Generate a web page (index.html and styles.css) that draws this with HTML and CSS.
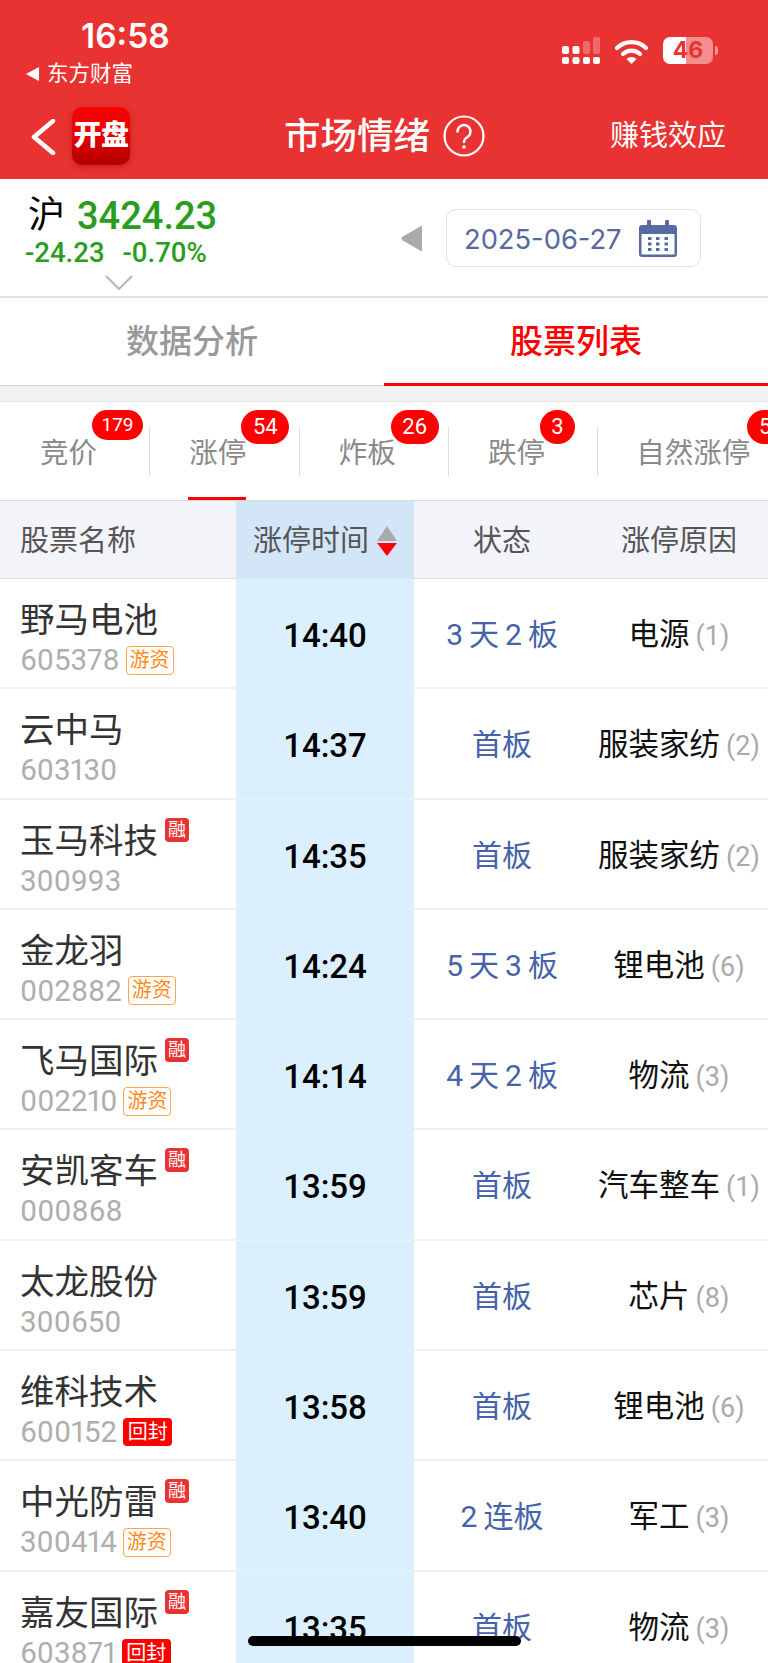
FILE: index.html
```html
<!DOCTYPE html>
<html lang="zh-CN">
<head>
<meta charset="utf-8">
<title>市场情绪</title>
<link rel="stylesheet" href="styles.css">
</head>
<body>
<div class="page">
  <header class="top">
    <div class="status">
      <div class="status-left">
        <div class="clock">16:58</div>
        <div class="return"><span class="return-arrow"></span><span>东方财富</span></div>
      </div>
      <div class="status-right">
        <svg class="signal" width="38" height="28" viewBox="0 0 38 28">
          <g fill="#fff">
            <rect x="0" y="9" width="7" height="8" rx="2"/><rect x="10.500" y="9" width="7" height="8" rx="2"/>
            <rect x="0" y="20" width="7" height="7" rx="2"/><rect x="10.500" y="20" width="7" height="7" rx="2"/>
            <rect x="21" y="20" width="7" height="7" rx="2"/><rect x="31" y="20" width="7" height="7" rx="2"/>
          </g>
          <g fill="#fff" fill-opacity=".28">
            <rect x="21" y="4" width="7" height="13" rx="2"/><rect x="31" y="0" width="7" height="17" rx="2"/>
          </g>
        </svg>
        <svg class="wifi" width="33" height="25" viewBox="0 0 33 25">
          <path d="M2 9 A21 21 0 0 1 31 9" fill="none" stroke="#fff" stroke-width="4.200" stroke-linecap="round"/>
          <path d="M8 15 A12.500 12.500 0 0 1 25 15" fill="none" stroke="#fff" stroke-width="4.200" stroke-linecap="round"/>
          <path d="M11.500 20 L16.500 25 L21.500 20 A7 7 0 0 0 11.500 20Z" fill="#fff"/>
        </svg>
        <div class="battery"><span>46</span></div>
        <div class="battery-nub"></div>
      </div>
    </div>
    <nav class="nav">
      <svg class="back" width="26" height="36" viewBox="0 0 26 36"><path d="M23 2 L4 18 L23 34" fill="none" stroke="#fff" stroke-width="4.500" stroke-linecap="round" stroke-linejoin="round"/></svg>
      <div class="logo">开盘</div>
      <div class="title">市场情绪</div>
      <svg class="help" width="42" height="42" viewBox="0 0 42 42">
        <circle cx="21" cy="21" r="19.500" fill="none" stroke="#fff" stroke-width="2.200"/>
        <path d="M14.500 16.500 A6.500 6.500 0 1 1 24.500 22 C22 23.500 21 24.500 21 27" fill="none" stroke="#fff" stroke-width="2.400" stroke-linecap="round"/>
        <circle cx="21" cy="32" r="1.700" fill="#fff"/>
      </svg>
      <div class="nav-link">赚钱效应</div>
    </nav>
  </header>

  <section class="index-bar">
    <div class="index">
      <div class="index-main"><span class="market">沪</span><span class="points">3424.23</span></div>
      <div class="index-change"><span>-24.23</span><span>-0.70%</span></div>
      <svg class="expand" width="28" height="15" viewBox="0 0 28 15"><path d="M1 1 L14 14 L27 1" fill="none" stroke="#b5b5b5" stroke-width="2"/></svg>
    </div>
    <svg class="prev" width="21" height="27" viewBox="0 0 21 27"><path d="M20 1 Q21 0 21 2 V25 Q21 27 20 26 L1 15 Q0 13.500 1 12Z" fill="#aaa"/></svg>
    <div class="date">
      <span class="date-text">2025-06-27</span>
      <svg width="38" height="37" viewBox="0 0 38 37">
        <rect x="0" y="5" width="38" height="32" rx="3" fill="#566ba0"/>
        <rect x="2.500" y="14" width="33" height="20.500" fill="#fff"/>
        <rect x="8" y="0" width="4" height="10" rx="1" fill="#566ba0"/><rect x="26" y="0" width="4" height="10" rx="1" fill="#566ba0"/>
        <g fill="#566ba0">
          <rect x="9" y="17" width="3.500" height="3"/><rect x="17" y="17" width="3.500" height="3"/><rect x="25.500" y="17" width="3.500" height="3"/>
          <rect x="9" y="22.500" width="3.500" height="3"/><rect x="17" y="22.500" width="3.500" height="3"/><rect x="25.500" y="22.500" width="3.500" height="3"/>
          <rect x="9" y="28" width="3.500" height="3"/><rect x="17" y="28" width="3.500" height="3"/><rect x="25.500" y="28" width="3.500" height="3"/>
        </g>
      </svg>
    </div>
  </section>

  <div class="tabs">
    <div class="tab">数据分析</div>
    <div class="tab tab-on">股票列表</div>
  </div>
  <div class="band"></div>

  <div class="subtabs">
    <div class="subtab">竞价<span class="count count-wide">179</span></div>
    <div class="subtab subtab-on">涨停<span class="count">54</span></div>
    <div class="subtab">炸板<span class="count">26</span></div>
    <div class="subtab">跌停<span class="count count-round">3</span></div>
    <div class="subtab subtab-last">自然涨停<span class="count">51</span></div>
  </div>

  <div class="grid head">
    <div class="head-name">股票名称</div>
    <div class="head-time">涨停时间
      <svg width="20" height="30" viewBox="0 0 20 30"><path d="M10 0 L20 15 H0Z" fill="#aaa"/><path d="M0 17 H20 L10 30Z" fill="#f00"/></svg>
    </div>
    <div class="head-cell">状态</div>
    <div class="head-cell">涨停原因</div>
  </div>

  <div class="grid row">
    <div class="stock"><div class="stock-name">野马电池</div><div class="stock-code">605378<span class="tag tag-hot">游资</span></div></div>
    <div class="time">14:40</div><div class="state"><span class="num">3</span>天<span class="num">2</span>板</div><div class="reason">电源<em>(1)</em></div>
  </div>
  <div class="grid row">
    <div class="stock"><div class="stock-name">云中马</div><div class="stock-code">603130</div></div>
    <div class="time">14:37</div><div class="state">首板</div><div class="reason">服装家纺<em>(2)</em></div>
  </div>
  <div class="grid row">
    <div class="stock"><div class="stock-name">玉马科技<span class="margin">融</span></div><div class="stock-code">300993</div></div>
    <div class="time">14:35</div><div class="state">首板</div><div class="reason">服装家纺<em>(2)</em></div>
  </div>
  <div class="grid row">
    <div class="stock"><div class="stock-name">金龙羽</div><div class="stock-code">002882<span class="tag tag-hot">游资</span></div></div>
    <div class="time">14:24</div><div class="state"><span class="num">5</span>天<span class="num">3</span>板</div><div class="reason">锂电池<em>(6)</em></div>
  </div>
  <div class="grid row">
    <div class="stock"><div class="stock-name">飞马国际<span class="margin">融</span></div><div class="stock-code">002210<span class="tag tag-hot">游资</span></div></div>
    <div class="time">14:14</div><div class="state"><span class="num">4</span>天<span class="num">2</span>板</div><div class="reason">物流<em>(3)</em></div>
  </div>
  <div class="grid row">
    <div class="stock"><div class="stock-name">安凯客车<span class="margin">融</span></div><div class="stock-code">000868</div></div>
    <div class="time">13:59</div><div class="state">首板</div><div class="reason">汽车整车<em>(1)</em></div>
  </div>
  <div class="grid row">
    <div class="stock"><div class="stock-name">太龙股份</div><div class="stock-code">300650</div></div>
    <div class="time">13:59</div><div class="state">首板</div><div class="reason">芯片<em>(8)</em></div>
  </div>
  <div class="grid row">
    <div class="stock"><div class="stock-name">维科技术</div><div class="stock-code">600152<span class="tag tag-back">回封</span></div></div>
    <div class="time">13:58</div><div class="state">首板</div><div class="reason">锂电池<em>(6)</em></div>
  </div>
  <div class="grid row">
    <div class="stock"><div class="stock-name">中光防雷<span class="margin">融</span></div><div class="stock-code">300414<span class="tag tag-hot">游资</span></div></div>
    <div class="time">13:40</div><div class="state"><span class="num">2</span>连板</div><div class="reason">军工<em>(3)</em></div>
  </div>
  <div class="grid row">
    <div class="stock"><div class="stock-name">嘉友国际<span class="margin">融</span></div><div class="stock-code">603871<span class="tag tag-back">回封</span></div></div>
    <div class="time">13:35</div><div class="state">首板</div><div class="reason">物流<em>(3)</em></div>
  </div>

  <div class="home-bar"></div>
</div>
</body>
</html>
```
FILE: styles.css
```css
* { box-sizing: border-box; }
html, body { margin: 0; padding: 0; }
body { background: #fff; font-family: Roboto, "Noto Sans CJK SC", sans-serif; }
.page { position: relative; width: 768px; height: 1663px; overflow: hidden; background: #fff; }

/* red top area */
.top { height: 179px; background: #e93232; color: #fff; }
.status { height: 95px; display: flex; justify-content: space-between; }
.status-left { padding: 18px 0 0 26px; }
.clock { font: 600 33.500px/36px Inter, sans-serif; padding-left: 55px; }
.return { display: flex; align-items: center; gap: 8px; margin-top: 6px; font-size: 21.500px; line-height: 28px; }
.return-arrow { border-style: solid; border-width: 7px 13px 7px 0; border-color: transparent #fff transparent transparent; }
.status-right { display: flex; align-items: flex-start; padding: 37px 50px 0 0; }
.wifi { margin: 2px 0 0 15px; }
.battery { width: 50px; height: 27px; margin-left: 15px; border-radius: 7px; background: linear-gradient(90deg, #fff 46%, rgba(255,255,255,.45) 46%); color: #e93232; font: 700 23px/27px Inter, sans-serif; text-align: center; }
.battery-nub { width: 3px; height: 9px; margin: 9px 0 0 2px; border-radius: 0 3px 3px 0; background: rgba(255,255,255,.5); }

.nav { position: relative; height: 84px; display: flex; align-items: flex-start; padding: 12px 42px 0 30px; }
.back { margin-top: 12px; }
.logo { width: 58px; height: 58px; margin-left: 16px; border-radius: 10px; background: linear-gradient(180deg, #f80000, #f00000 40%, #b00000); box-shadow: 0 2px 6px rgba(120,0,0,.35); font-weight: 900; font-size: 28px; line-height: 58px; text-align: center; letter-spacing: -.5px; white-space: nowrap; }
.title { margin-left: 154px; font-size: 36.500px; font-weight: 500; line-height: 60px; }
.help { margin: 8px 0 0 13px; }
.nav-link { margin-left: auto; font-size: 29px; line-height: 58px; }

/* index and date */
.index-bar { height: 119px; display: flex; align-items: flex-start; border-bottom: 2px solid #e2e2e2; }
.index { position: relative; width: 401px; padding: 12px 0 0 25px; }
.index-main { display: flex; align-items: center; height: 50px; line-height: 44px; }
.market { margin-left: 3px; font-size: 37px; color: #000; }
.points { margin-left: 12px; font-size: 38px; font-weight: 500; color: #2a9d1d; }
.index-change { display: flex; gap: 18px; font-size: 27.500px; font-weight: 500; line-height: 24px; color: #2a9d1d; }
.expand { position: absolute; left: 105px; top: 96px; }
.prev { margin-top: 46px; }
.date { display: flex; align-items: center; justify-content: space-between; width: 255px; height: 58px; margin: 30px 0 0 24px; padding: 0 23px 0 17px; border: 1px solid #e4e4e4; border-radius: 10px; font: 400 27.300px/1 Inter, sans-serif; color: #56699f; }
.date-text { padding-top: 3px; }

/* main tabs */
.tabs { height: 88px; display: flex; border-bottom: 1px solid #d5d5d5; }
.tab { width: 384px; font-size: 33px; font-weight: 500; line-height: 88px; text-align: center; color: #999; }
.tab-on { color: #f00; border-bottom: 3px solid #f00; height: 88px; }
.band { height: 16px; background: #f2f2f2; border-bottom: 1px solid #e5e5e5; }

/* category tabs */
.subtabs { height: 99px; display: flex; overflow: hidden; border-bottom: 1px solid #d8d8d8; }
.subtab { position: relative; flex: 0 0 149.330px; height: 98px; padding: 30px 0 0 40px; font-size: 28.500px; line-height: 44px; color: #8a8a8a; }
.subtab::after { content: ""; position: absolute; right: -1px; top: 25px; width: 1px; height: 49px; background: #dcdcdc; }
.subtab-on::before { content: ""; position: absolute; left: 39px; bottom: 0; width: 58px; height: 3px; background: #f00; }
.subtab-last { flex: 0 0 240px; padding-left: 39px; }
.subtab-last::after { display: none; }
.count { position: absolute; left: 92px; top: 8px; min-width: 48px; height: 34px; padding: 0 6px; border-radius: 17px; background: #f00; color: #fff; font-size: 22px; line-height: 34px; text-align: center; }
.count-wide { width: 51px; height: 30px; padding: 0; font-size: 19px; line-height: 30px; }
.count-round { min-width: 35px; padding: 0; }
.subtab-last .count { left: 150px; }

/* table */
.grid { display: grid; grid-template-columns: 236px 178px 176px 178px; }
.head { height: 78px; border-bottom: 1px solid #dcdcdc; background: #f3f3fa; font-size: 29px; color: #555; line-height: 80px; text-align: center; }
.head-name { padding-left: 20px; text-align: left; }
.head-time { display: flex; align-items: center; justify-content: center; gap: 8px; background: #d3e6f8; }
.row { height: 110.300px; border-bottom: 2px solid #f0f0f0; }
.stock { padding: 21px 0 0 20px; }
.stock-name { display: flex; align-items: flex-start; height: 40px; font-size: 34.500px; line-height: 41px; color: #333; }
.stock-code { display: flex; align-items: center; height: 40px; font-size: 29.500px; font-variant-numeric: proportional-nums; color: #aeaeae; }
.margin { width: 24px; height: 24px; margin: -3px 0 0 7px; border-radius: 4px; background: #e93232; color: #fff; font-size: 18px; line-height: 24px; text-align: center; }
.tag { height: 29px; margin-left: 6px; border-radius: 4px; font-size: 20px; line-height: 27px; }
.tag-hot { width: 48px; border: 1px solid #ffa64d; color: #ff8a1a; text-align: center; }
.tag-back { width: 49px; height: 28px; background: #f00; color: #fff; text-align: center; line-height: 28px; }
.time { padding-top: 4px; background: #dbf0ff; color: #000; font-size: 33px; font-weight: 500; line-height: 106px; text-align: center; }
.state { padding-top: 4px; color: #4463a8; font-size: 30px; line-height: 104px; text-align: center; }
.num { margin: 0 6px; }
.num:first-child { margin-left: 0; }
.reason { padding-top: 4px; color: #111; font-size: 30.500px; line-height: 104px; text-align: center; white-space: nowrap; }
.reason em { margin-left: 6px; font-style: normal; font-size: 27px; color: #aaa; }

.home-bar { position: absolute; left: 248px; top: 1636px; width: 273px; height: 10px; border-radius: 5px; background: #000; }
```
